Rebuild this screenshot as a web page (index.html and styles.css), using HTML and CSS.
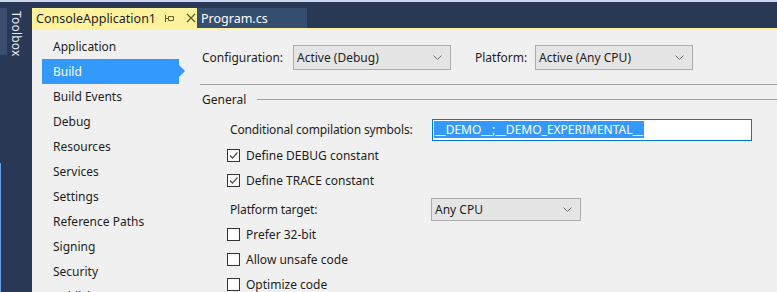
FILE: index.html
```html
<!DOCTYPE html>
<html>
<head>
<meta charset="utf-8">
<link rel="stylesheet" href="styles.css">
</head>
<body>
<div class="topline"></div>
<div class="app">
  <aside class="side">
    <div class="side-tab"></div>
    <div class="toolbox">Toolbox</div>
    <div class="side-accent"></div>
  </aside>
  <div class="main">
    <div class="tabbar">
      <div class="tab active">
        <span class="tab-title">ConsoleApplication1</span>
        <svg class="pin" width="11" height="9" viewBox="0 0 11 9"><path d="M1.5 1v7M1.5 4.5h3M4.5 2.5h5v4h-5z" fill="none" stroke="#6b5e2a" stroke-width="1"/></svg>
        <svg class="close" width="10" height="10" viewBox="0 0 10 10"><path d="M1 1l8 8M9 1l-8 8" stroke="#6b5e2a" stroke-width="1.3"/></svg>
      </div>
      <div class="tab other"><span class="tab-title">Program.cs</span></div>
    </div>
    <div class="content">
      <nav class="nav">
        <div class="nav-item">Application</div>
        <div class="nav-item selected">Build</div>
        <div class="nav-item">Build Events</div>
        <div class="nav-item">Debug</div>
        <div class="nav-item">Resources</div>
        <div class="nav-item">Services</div>
        <div class="nav-item">Settings</div>
        <div class="nav-item">Reference Paths</div>
        <div class="nav-item">Signing</div>
        <div class="nav-item">Security</div>
        <div class="nav-item">Publish</div>
      </nav>
      <section class="pane">
        <div class="config-row">
          <span class="lbl">Configuration:</span>
          <div class="select sel-config"><span>Active (Debug)</span><svg class="chev" width="9" height="5" viewBox="0 0 9 5"><path d="M0.5 0.5l4 4 4-4" fill="none" stroke="#707070" stroke-width="1"/></svg></div>
          <span class="lbl plat-lbl">Platform:</span>
          <div class="select sel-config"><span>Active (Any CPU)</span><svg class="chev" width="9" height="5" viewBox="0 0 9 5"><path d="M0.5 0.5l4 4 4-4" fill="none" stroke="#707070" stroke-width="1"/></svg></div>
        </div>
        <div class="sep"></div>
        <div class="group-head"><span>General</span><div class="group-line"></div></div>
        <div class="general">
          <div class="row field-row">
            <span class="flabel">Conditional compilation symbols:</span>
            <div class="input"><span class="selected-text">__DEMO__;__DEMO_EXPERIMENTAL__</span></div>
          </div>
          <div class="row check-row first-check">
            <span class="box checked"><svg width="11" height="11" viewBox="0 0 11 11"><path d="M2 5.5l2.5 2.5 5-5.5" fill="none" stroke="#555" stroke-width="1.3"/></svg></span>
            <span>Define DEBUG constant</span>
          </div>
          <div class="row check-row">
            <span class="box checked"><svg width="11" height="11" viewBox="0 0 11 11"><path d="M2 5.5l2.5 2.5 5-5.5" fill="none" stroke="#555" stroke-width="1.3"/></svg></span>
            <span>Define TRACE constant</span>
          </div>
          <div class="row field-row target-row">
            <span class="flabel">Platform target:</span>
            <div class="select sel-target"><span>Any CPU</span><svg class="chev" width="9" height="5" viewBox="0 0 9 5"><path d="M0.5 0.5l4 4 4-4" fill="none" stroke="#707070" stroke-width="1"/></svg></div>
          </div>
          <div class="row check-row">
            <span class="box"></span>
            <span>Prefer 32-bit</span>
          </div>
          <div class="row check-row">
            <span class="box"></span>
            <span>Allow unsafe code</span>
          </div>
          <div class="row check-row">
            <span class="box"></span>
            <span>Optimize code</span>
          </div>
        </div>
      </section>
    </div>
  </div>
</div>
</body>
</html>
```

FILE: styles.css
```css
* { box-sizing: border-box; }
html, body { margin: 0; padding: 0; }
body {
  width: 777px;
  height: 292px;
  overflow: hidden;
  background: #293955;
  font-family: "Noto Sans", "Open Sans", sans-serif;
  font-size: 12px;
  color: #1e1e1e;
}
.topline { height: 2px; background: #ccd5f0; }
.app { display: flex; height: 290px; overflow: hidden; }
.side {
  width: 32px;
  flex: none;
  background: #293955;
  position: relative;
}
.side-tab {
  position: absolute;
  left: 0; top: 6px;
  width: 7px; height: 47px;
  background: #3a4d70;
}
.toolbox {
  position: absolute;
  left: 9px; top: 9px;
  writing-mode: vertical-rl;
  color: #e6e9f0;
  font-size: 12px;
  line-height: 14px;
  letter-spacing: 0.2px;
}
.side-accent {
  position: absolute;
  left: 0; top: 161px; bottom: 0;
  width: 1px;
  background: #5fa0e6;
}
.main { flex: 1; display: flex; flex-direction: column; min-width: 0; }
.tabbar {
  height: 26px;
  display: flex;
  align-items: flex-end;
  border-bottom: 2px solid #fff29d;
  box-sizing: content-box;
}
.tab {
  height: 20px;
  display: flex;
  align-items: center;
  font-size: 12.5px;
}
.tab.active {
  width: 165px;
  background: #fff29d;
  color: #1e1e1e;
  padding-left: 4px;
}
.tab.active .tab-title { width: 126px; }
.pin { margin-left: 2px; }
.close { margin-left: 11px; }
.tab.other {
  width: 110px;
  background: #364e6f;
  color: #ffffff;
  padding-left: 4px;
}
.content {
  flex: 1;
  background: #f0f0f0;
  display: flex;
  min-height: 0;
  overflow: hidden;
}
.nav {
  width: 168px;
  flex: none;
  padding-top: 4px;
}
.nav-item {
  height: 25px;
  line-height: 25px;
  margin-left: 10px;
  padding-left: 11px;
  width: 137px;
  white-space: nowrap;
}
.nav-item.selected {
  background: #3399ff;
  color: #ffffff;
  position: relative;
}
.nav-item.selected::after {
  content: "";
  position: absolute;
  right: -6px; top: 6px;
  border-left: 6px solid #3399ff;
  border-top: 6.5px solid transparent;
  border-bottom: 6.5px solid transparent;
}
.pane { flex: 1; min-width: 0; }
.config-row {
  display: flex;
  align-items: center;
  height: 25px;
  margin-top: 15px;
  padding-left: 2px;
}
.lbl { white-space: nowrap; }
.config-row .lbl:first-child { width: 91px; }
.plat-lbl { margin-left: 24px; width: 60px; }
.select {
  height: 25px;
  border: 1px solid #acacac;
  background: #e5e5e5;
  display: flex;
  align-items: center;
  justify-content: space-between;
  padding: 0 8px 0 3px;
  color: #1e1e1e;
}
.sel-config { width: 158px; }
.sel-target { width: 150px; height: 23px; }
.sep { height: 1px; background: #a0a0a0; margin-top: 14px; }
.group-head {
  display: flex;
  align-items: center;
  height: 25px;
  margin-top: 2px;
  padding-left: 2px;
}
.group-line { flex: 1; height: 1px; background: #a0a0a0; margin-left: 11px; }
.general { padding-left: 27px; }
.row { display: flex; align-items: center; height: 25px; white-space: nowrap; }
.field-row { margin-top: 5px; padding-left: 3px; }
.flabel { width: 202px; flex: none; letter-spacing: -0.15px; }
.input {
  width: 320px;
  height: 22px;
  border: 1px solid #0078d7;
  background: #ffffff;
  display: flex;
  align-items: center;
  padding-left: 1px;
}
.selected-text {
  background: #3399ff;
  color: #ffffff;
  line-height: 17px;
  padding: 0 1px;
}
.first-check { margin-top: 1px; }
.target-row { margin-top: 4px; }
.target-row .flabel { width: 201px; }
.box {
  width: 13px; height: 13px;
  border: 1px solid #333333;
  background: #ffffff;
  margin-right: 6px;
  display: flex;
  align-items: center;
  justify-content: center;
  flex: none;
}
.box.checked { background: #ffffff; }
```
